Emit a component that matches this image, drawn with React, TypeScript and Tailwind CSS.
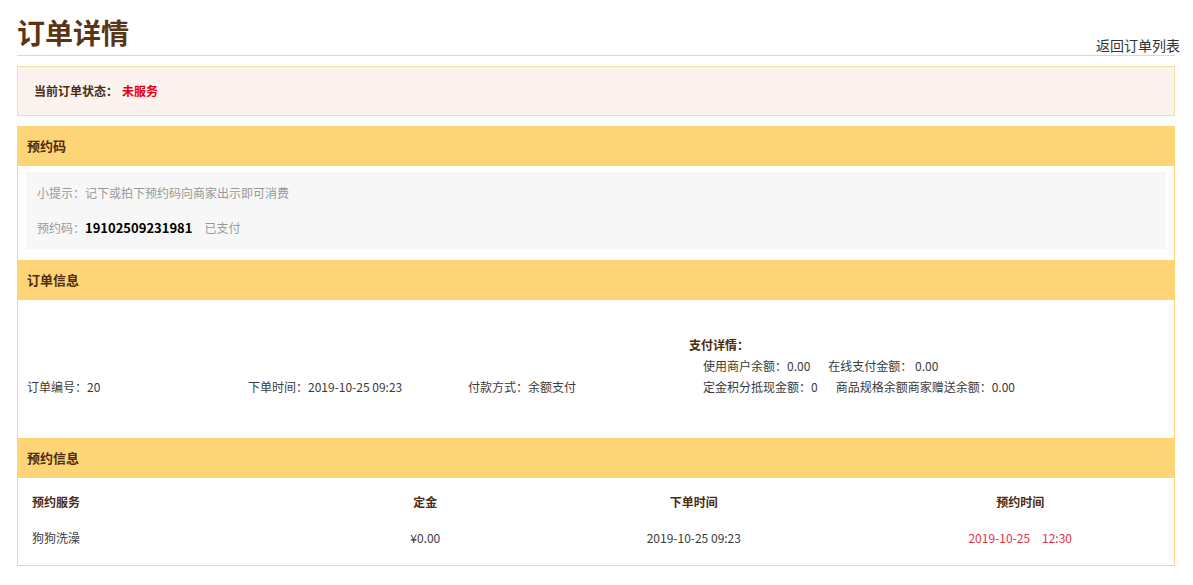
import React from 'react';

const font = "font-['Microsoft_YaHei','Noto_Sans_CJK_SC','Noto_Sans',sans-serif]";

const SectionHead: React.FC<{ title: string }> = ({ title }) => (
  <div className="h-10 bg-[#fdd576] pl-[9px] flex items-center text-[13px] font-bold text-[#4d2c10]">{title}</div>
);

const App: React.FC = () => {
  return (
    <div className={`${font} bg-white w-[1193px] h-[585px] overflow-hidden text-[12px] text-[#3a3a3a]`}>
      <div className="ml-[17px] w-[1158px] pt-[12px]">
        {/* title */}
        <div className="relative h-[44px] border-b border-[#f5d88e]">
          <h1 className="text-[28px] font-bold leading-[40px] text-[#5a3414]">订单详情</h1>
          <a className="absolute right-[-5px] bottom-[1px] text-[14px] leading-[18px] text-[#333]">返回订单列表</a>
        </div>

        {/* status */}
        <div className="mt-[10px] h-[50px] border border-[#f5dca0] bg-[#fcf2ee] flex items-center pl-[16px] font-bold">
          <span className="text-[#4d2c10]">当前订单状态：</span>
          <span className="ml-[4px] text-[#e60012]">未服务</span>
        </div>

        <div className="mt-[10px] border border-t-0 border-[#fdd576]">
          <SectionHead title="预约码" />
          <div className="px-[8px] pt-[6px] pb-[11px]">
            <div className="bg-[#f7f7f7] h-[77px] pl-[11px] text-[#999] flex flex-col justify-center gap-[17px]">
              <div className="leading-[18px]">小提示：记下或拍下预约码向商家出示即可消费</div>
              <div className="leading-[18px]">
                预约码：<b className="text-[13px] text-black">19102509231981</b>
                <span className="ml-[12px]">已支付</span>
              </div>
            </div>
          </div>

          <SectionHead title="订单信息" />
          <div className="h-[138px] pl-[9px] flex items-end pb-[41px]">
            <div className="w-[221px] leading-[21px]">订单编号：20</div>
            <div className="w-[220px] leading-[21px]">下单时间：2019-10-25 09:23</div>
            <div className="w-[221px] leading-[21px]">付款方式：余额支付</div>
            <div className="leading-[21px]">
              <div className="font-bold text-[#4d2c10]">支付详情：</div>
              <div className="pl-[14px]">
                使用商户余额：0.00<span className="ml-[18px]">在线支付金额： 0.00</span>
              </div>
              <div className="pl-[14px]">
                定金积分抵现金额：0<span className="ml-[18px]">商品规格余额商家赠送余额：0.00</span>
              </div>
            </div>
          </div>

          <SectionHead title="预约信息" />
          <div className="px-[9px] pt-[12px] h-[87px]">
            <div className="flex h-[24px] items-center font-bold text-[#4d2c10]">
              <div className="w-[312px] pl-[5px]">预约服务</div>
              <div className="w-[174px] text-center">定金</div>
              <div className="w-[364px] text-center">下单时间</div>
              <div className="w-[290px] text-center">预约时间</div>
            </div>
            <div className="flex h-[24px] mt-[12px] items-center">
              <div className="w-[312px] pl-[5px]">狗狗洗澡</div>
              <div className="w-[174px] text-center">¥0.00</div>
              <div className="w-[364px] text-center">2019-10-25 09:23</div>
              <div className="w-[290px] text-center text-[#e0304a]">
                2019-10-25<span className="ml-[12px]">12:30</span>
              </div>
            </div>
          </div>
        </div>
      </div>
    </div>
  );
};

export default App;
